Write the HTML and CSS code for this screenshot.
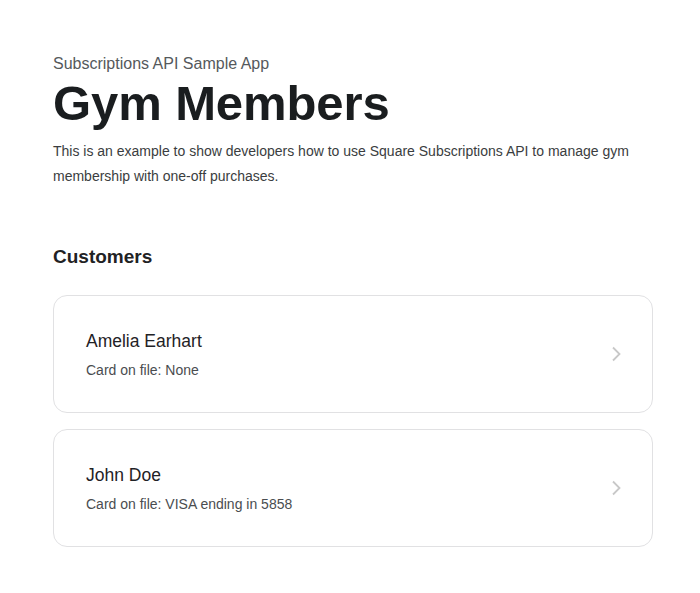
FILE: index.html
```html
<!DOCTYPE html>
<html>
<head>
<meta charset="utf-8">
<link rel="stylesheet" href="styles.css">
</head>
<body>
<main class="page">
  <header class="intro">
    <p class="eyebrow">Subscriptions API Sample App</p>
    <h1 class="title">Gym Members</h1>
    <p class="lead">This is an example to show developers how to use Square Subscriptions API to manage gym membership with one-off purchases.</p>
  </header>
  <section class="customers">
    <h2 class="section-title">Customers</h2>
    <ul class="list">
      <li class="card">
        <div class="card-text">
          <div class="name">Amelia Earhart</div>
          <div class="meta">Card on file: None</div>
        </div>
        <svg class="chev" width="12" height="16" viewBox="0 0 12 16"><path d="M3 1.5 L9.5 8 L3 14.5" fill="none" stroke="#c8c8c8" stroke-width="1.8"/></svg>
      </li>
      <li class="card">
        <div class="card-text">
          <div class="name">John Doe</div>
          <div class="meta">Card on file: VISA ending in 5858</div>
        </div>
        <svg class="chev" width="12" height="16" viewBox="0 0 12 16"><path d="M3 1.5 L9.5 8 L3 14.5" fill="none" stroke="#c8c8c8" stroke-width="1.8"/></svg>
      </li>
    </ul>
  </section>
</main>
</body>
</html>
```
FILE: styles.css
```css
html, body { margin: 0; padding: 0; background: #fff; }
body { font-family: "Liberation Sans", Arial, sans-serif; color: #1a1d1f; }
.page { width: 600px; padding: 55px 0 40px 53px; }
.eyebrow { margin: 0; font-size: 16px; line-height: 18px; color: #55595c; }
.title { margin: 2px 0 0; font-size: 49px; line-height: 56px; font-weight: 700; color: #1a1d1f; letter-spacing: -0.1px; }
.lead { margin: 8px 0 0; font-size: 14px; line-height: 25px; color: #3a3d40; }
.customers { margin-top: 56px; }
.section-title { margin: 0; font-size: 19px; line-height: 24px; font-weight: 700; color: #1f2224; }
.list { list-style: none; margin: 26px 0 0; padding: 0; display: flex; flex-direction: column; gap: 16px; }
.card { box-sizing: border-box; height: 118px; border: 1px solid #e1e1e3; border-radius: 14px; padding: 0 30px 0 32px; display: flex; align-items: center; justify-content: space-between; }
.name { font-size: 17.5px; line-height: 20px; color: #1f2226; }
.meta { margin-top: 11px; font-size: 14px; line-height: 16px; color: #4a4d50; }
.chev { display: block; }
```
